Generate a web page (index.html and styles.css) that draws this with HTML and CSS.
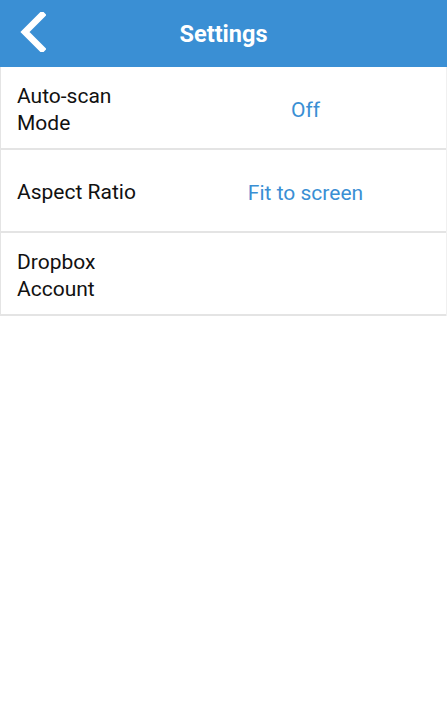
FILE: index.html
```html
<!DOCTYPE html>
<html>
<head>
<meta charset="utf-8">
<link rel="stylesheet" href="styles.css">
</head>
<body>
<header class="bar">
  <button class="back" aria-label="Back">
    <svg width="28" height="40" viewBox="0 0 28 40"><path d="M24 3 L7 20 L24 37" fill="none" stroke="#fff" stroke-width="6.5" stroke-linecap="square" stroke-linejoin="miter"/></svg>
  </button>
  <h1 class="title">Settings</h1>
</header>
<main class="list">
  <div class="row">
    <div class="label">Auto-scan<br>Mode</div>
    <div class="value">Off</div>
  </div>
  <div class="row">
    <div class="label">Aspect Ratio</div>
    <div class="value">Fit to screen</div>
  </div>
  <div class="row">
    <div class="label">Dropbox<br>Account</div>
    <div class="value"></div>
  </div>
</main>
</body>
</html>
```
FILE: styles.css
```css
* { box-sizing: border-box; }
html, body { margin: 0; padding: 0; background: #fff; }
body { font-family: Roboto, "Noto Sans", sans-serif; width: 447px; }
.bar {
  height: 67px;
  background: #3a8fd4;
  display: flex;
  align-items: center;
  justify-content: center;
  position: relative;
}
.back {
  position: absolute;
  left: 18px;
  top: 12px;
  padding: 0;
  border: 0;
  background: none;
  display: flex;
}
.title {
  margin: 0;
  color: #fff;
  font-size: 23.5px;
  font-weight: 700;
}
.list {
  border-left: 1px solid #e4e4e4;
  border-right: 1px solid #f0f0f0;
}
.row {
  height: 83px;
  display: grid;
  grid-template-columns: 148px 1fr;
  align-items: center;
  border-bottom: 2px solid #e4e4e4;
  padding-left: 16px;
  padding-top: 4px;
}
.label {
  font-size: 21px;
  line-height: 27px;
  color: #111;
}
.value {
  font-size: 21px;
  color: #3a8fd4;
  text-align: center;
}
```
